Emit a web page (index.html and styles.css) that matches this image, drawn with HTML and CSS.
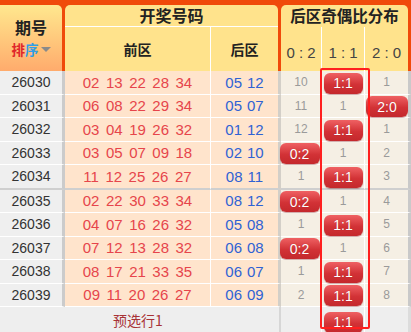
FILE: index.html
```html
<!DOCTYPE html>
<html lang="zh-CN">
<head>
<meta charset="utf-8">
<title>后区奇偶比分布</title>
<link rel="stylesheet" href="styles.css">
</head>
<body>
<div class="board">
  <div class="head">
    <div class="h-id">
      <div class="h-id-title">期号</div>
      <div class="sort"><span class="s1">排</span><span class="s2">序</span><span class="tri"></span></div>
    </div>
    <div class="h-draw">
      <div class="h-title">开奖号码</div>
      <div class="h-sub">
        <div class="h-front">前区</div>
        <div class="h-back">后区</div>
      </div>
    </div>
    <div class="h-odd">
      <div class="h-title h-title-odd">后区奇偶比分布</div>
      <div class="h-sub odd-sub">
        <div class="hs0">0 : 2</div>
        <div class="hs1">1 : 1</div>
        <div class="hs2">2 : 0</div>
      </div>
    </div>
  </div>

  <div class="rows">
    <div class="row">
      <div class="c id">26030</div>
      <div class="c front"><span>02</span><span>13</span><span>22</span><span>28</span><span>34</span></div>
      <div class="c back"><span>05</span><span>12</span></div>
      <div class="c o0">10</div>
      <div class="c o1"><span class="badge">1:1</span></div>
      <div class="c o2">1</div>
    </div>
    <div class="row">
      <div class="c id">26031</div>
      <div class="c front"><span>06</span><span>08</span><span>22</span><span>29</span><span>34</span></div>
      <div class="c back"><span>05</span><span>07</span></div>
      <div class="c o0">11</div>
      <div class="c o1">1</div>
      <div class="c o2"><span class="badge">2:0</span></div>
    </div>
    <div class="row">
      <div class="c id">26032</div>
      <div class="c front"><span>03</span><span>04</span><span>19</span><span>26</span><span>32</span></div>
      <div class="c back"><span>01</span><span>12</span></div>
      <div class="c o0">12</div>
      <div class="c o1"><span class="badge">1:1</span></div>
      <div class="c o2">1</div>
    </div>
    <div class="row">
      <div class="c id">26033</div>
      <div class="c front"><span>03</span><span>05</span><span>07</span><span>09</span><span>18</span></div>
      <div class="c back"><span>02</span><span>10</span></div>
      <div class="c o0"><span class="badge">0:2</span></div>
      <div class="c o1">1</div>
      <div class="c o2">2</div>
    </div>
    <div class="row row-group-end">
      <div class="c id">26034</div>
      <div class="c front"><span>11</span><span>12</span><span>25</span><span>26</span><span>27</span></div>
      <div class="c back"><span>08</span><span>11</span></div>
      <div class="c o0">1</div>
      <div class="c o1"><span class="badge">1:1</span></div>
      <div class="c o2">3</div>
    </div>
    <div class="row">
      <div class="c id">26035</div>
      <div class="c front"><span>02</span><span>22</span><span>30</span><span>33</span><span>34</span></div>
      <div class="c back"><span>08</span><span>12</span></div>
      <div class="c o0"><span class="badge">0:2</span></div>
      <div class="c o1">1</div>
      <div class="c o2">4</div>
    </div>
    <div class="row">
      <div class="c id">26036</div>
      <div class="c front"><span>04</span><span>07</span><span>16</span><span>26</span><span>32</span></div>
      <div class="c back"><span>05</span><span>08</span></div>
      <div class="c o0">1</div>
      <div class="c o1"><span class="badge">1:1</span></div>
      <div class="c o2">5</div>
    </div>
    <div class="row">
      <div class="c id">26037</div>
      <div class="c front"><span>07</span><span>12</span><span>13</span><span>28</span><span>32</span></div>
      <div class="c back"><span>06</span><span>08</span></div>
      <div class="c o0"><span class="badge">0:2</span></div>
      <div class="c o1">1</div>
      <div class="c o2">6</div>
    </div>
    <div class="row">
      <div class="c id">26038</div>
      <div class="c front"><span>08</span><span>17</span><span>21</span><span>33</span><span>35</span></div>
      <div class="c back"><span>06</span><span>07</span></div>
      <div class="c o0">1</div>
      <div class="c o1"><span class="badge">1:1</span></div>
      <div class="c o2">7</div>
    </div>
    <div class="row">
      <div class="c id">26039</div>
      <div class="c front"><span>09</span><span>11</span><span>20</span><span>26</span><span>27</span></div>
      <div class="c back"><span>06</span><span>09</span></div>
      <div class="c o0">2</div>
      <div class="c o1"><span class="badge">1:1</span></div>
      <div class="c o2">8</div>
    </div>
  </div>

  <div class="foot">
    <div class="f id"></div>
    <div class="f front"><span class="pick">预选行1</span></div>
    <div class="f back"></div>
    <div class="f o0"></div>
    <div class="f o1"><span class="badge">1:1</span></div>
    <div class="f o2"></div>
  </div>

  <div class="focus"></div>
</div>
</body>
</html>
```

FILE: styles.css
```css
* { box-sizing: border-box; }

body {
  margin: 0;
  background: #eeeeee;
  font-family: "Liberation Sans", Arial, "Noto Sans CJK SC", sans-serif;
}

.board {
  position: relative;
  width: 411px;
  height: 332px;
  overflow: hidden;
  background: #eeeeee;
}

/* ---------- header ---------- */
.head {
  display: flex;
  height: 71px;
  padding-top: 5px;
  background: #f04a0a;
}

.h-id {
  width: 62px;
  margin-right: 3px;
  border-top-right-radius: 5px;
  background: linear-gradient(#ffe88e, #ffab6c);
  display: flex;
  flex-direction: column;
  align-items: center;
  padding-top: 13px;
  font-family: "Noto Sans CJK SC", sans-serif;
  font-weight: 700;
  color: #222;
}

.h-id-title {
  height: 18px;
  font-size: 16px;
  line-height: 18px;
}

.sort {
  display: flex;
  align-items: center;
  height: 16px;
  margin-top: 4.5px;
  font-size: 13.5px;
  line-height: 16px;
}

.s1 { color: #e0262a; }
.s2 { color: #2f9ee8; }

.tri {
  width: 0;
  height: 0;
  margin-left: 2px;
  margin-top: 1px;
  border-left: 5px solid transparent;
  border-right: 5px solid transparent;
  border-top: 5px solid #8a8a8a;
}

.h-draw {
  width: 213px;
  margin-right: 3px;
  border-radius: 5px 5px 0 0;
  background: #ffe38c;
  display: flex;
  flex-direction: column;
}

.h-odd {
  width: 127px;
  border-radius: 5px 5px 0 0;
  background: #ffe38c;
  display: flex;
  flex-direction: column;
}

.h-title {
  height: 22px;
  border-bottom: 1px solid #ffffff;
  text-align: center;
  font-family: "Noto Sans CJK SC", sans-serif;
  font-weight: 700;
  font-size: 16px;
  line-height: 21px;
  color: #222;
}

.h-title-odd {
  border-bottom-color: #ffe38c;
  font-size: 15.5px;
}

.h-sub {
  flex: 1;
  display: flex;
}

.h-front,
.h-back {
  display: flex;
  align-items: center;
  justify-content: center;
  font-family: "Noto Sans CJK SC", sans-serif;
  font-weight: 700;
  font-size: 14px;
  color: #222;
}

.h-front {
  width: 146px;
  border-right: 1px solid #ffffff;
}

.h-back { flex: 1; }

.odd-sub > div {
  display: flex;
  align-items: center;
  justify-content: center;
  padding-top: 6px;
  font-size: 15px;
  color: #444;
}

.hs0 { width: 41px; border-right: 1px solid #ffffff; }
.hs1 { width: 43px; border-right: 1px solid #ffffff; }
.hs2 { width: 43px; }

/* ---------- rows ---------- */
.row {
  display: flex;
  height: 23.5px;
}

.c {
  display: flex;
  align-items: center;
  justify-content: center;
  border-bottom: 1px solid #ffffff;
}

.row-group-end .c {
  border-bottom: 2px solid #cfcfcf;
}

.row-group-end { height: 24.5px; }

.id {
  width: 65px;
  border-right: 3px solid #cbcbcb;
  background: #efefef;
  color: #333;
  font-size: 14px;
}

.front {
  width: 146px;
  border-right: 1px solid #ffffff;
  background: #ffe4cc;
  color: #e6454b;
  font-size: 15px;
  gap: 6.5px;
}

.back {
  width: 70px;
  border-right: 3px solid #d3cfc8;
  background: #ffe4cc;
  color: #2f62d4;
  font-size: 15px;
  gap: 5px;
}

.o0, .o1, .o2 {
  background: #f5efe4;
  color: #9a9a9a;
  font-size: 12px;
}

.o0 { width: 41px; border-right: 1px solid #ffffff; }
.o1 { width: 43px; border-right: 1px solid #ffffff; }
.o2 { width: 46px; border-right: 3px solid #c9c9c9; }

.badge {
  display: flex;
  align-items: center;
  justify-content: center;
  flex: none;
  width: 39px;
  height: 21px;
  margin-top: 2px;
  border-radius: 6px;
  background: linear-gradient(#ef6163, #d23236 55%, #c4282c);
  box-shadow: 0 1px 1px rgba(120, 0, 0, 0.35);
  color: #ffffff;
  font-size: 14px;
  text-shadow: 0 0 1px rgba(120, 0, 0, 0.4);
}

.o0 .badge { width: 40px; margin-left: -3px; }
.o2 .badge { width: 42px; margin-left: 1px; }

/* ---------- footer ---------- */
.foot {
  display: flex;
  height: 25px;
}

.f {
  display: flex;
  align-items: center;
  justify-content: center;
  background: #eeeeee;
}

.foot .id { border-right: none; }
.foot .front { border-right: none; background: #eeeeee; }
.foot .back { border-right: 2px solid #d6d6d6; background: #eeeeee; }
.foot .o0, .foot .o1, .foot .o2 { background: #eeeeee; }
.foot .o2 { border-right: 3px solid #dcdcdc; }
.foot .badge { margin-top: 5px; }

.pick {
  font-family: "Noto Sans CJK SC", sans-serif;
  font-size: 14px;
  color: #a83236;
}

/* ---------- highlight frame over the 1:1 column ---------- */
.focus {
  position: absolute;
  left: 320px;
  top: 68px;
  width: 50px;
  height: 261px;
  border: 2px solid #ff1f1f;
  border-radius: 2px;
  pointer-events: none;
}
```
